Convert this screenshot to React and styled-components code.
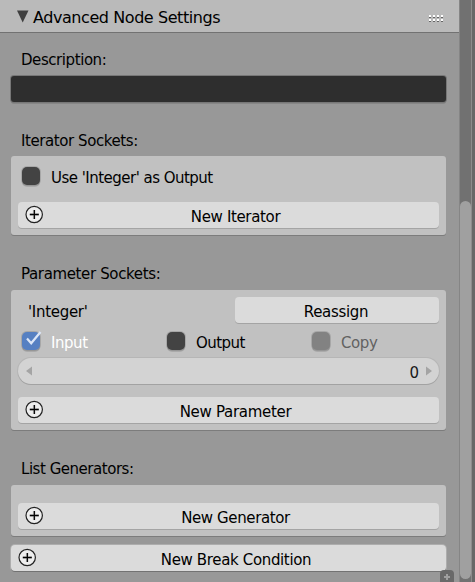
import React from "react";
import styled, { createGlobalStyle } from "styled-components";

const GlobalStyle = createGlobalStyle`
  * { box-sizing: border-box; }
  body {
    margin: 0;
    overflow: hidden;
    background: #989898;
    font-family: "DejaVu Sans", sans-serif;
    font-size: 15px;
    color: #000;
  }
`;

const Region = styled.div`
  position: relative;
  display: flex;
  width: 475px;
  height: 582px;
  overflow: hidden;
  background: #989898;
`;

const Panel = styled.main`
  width: 459px;
  flex: none;
`;

const Header = styled.header`
  display: flex;
  align-items: center;
  height: 33px;
  padding: 0 16px 0 17px;
  background: #bababa;
  border-bottom: 1px solid #727272;
`;

const Title = styled.h1`
  flex: 1;
  margin: 4px 0 0 4px;
  font-size: 16px;
  font-weight: 400;
  line-height: 24px;
  letter-spacing: -0.43px;
  white-space: nowrap;
`;

const Glyph = styled.svg`
  display: block;
  flex: none;
`;

const Grip = styled(Glyph)`
  margin-top: 5px;
`;

const Section = styled.section`
  padding: ${(p) => p.$top}px 13px 0 11px;
`;

const Label = styled.div`
  height: 24px;
  margin-bottom: ${(p) => (p.$gap === undefined ? 4 : p.$gap)}px;
  padding-left: 10px;
  line-height: 24px;
  letter-spacing: ${(p) => p.$track}px;
  white-space: nowrap;
`;

const TextField = styled.div`
  height: 26px;
  border-radius: 3px;
  background: #2e2e2e;
  box-shadow: 0 0 0 1px #777, 0 2px 0 #868686;
`;

const Box = styled.div`
  height: ${(p) => p.$height}px;
  padding: ${(p) => p.$top}px 7px 0;
  border-radius: 3px;
  background: #c1c1c1;
  box-shadow: 0 1px 0 #7c7c7c;
`;

const Button = styled.button`
  position: relative;
  display: flex;
  align-items: center;
  justify-content: center;
  width: ${(p) => (p.$width ? p.$width + "px" : "100%")};
  height: 26px;
  margin: 0;
  padding: 3px ${(p) => p.$inset || 0}px 0 ${(p) => p.$shift || 0}px;
  border: 0;
  border-radius: 4px;
  background: #dbdbdb;
  box-shadow: ${(p) => (p.$raised ? "0 1px 0 #727272, 0 0 0 1px #adadad" : "0 1px 0 #a4a4a4")};
  font: inherit;
  color: inherit;
  letter-spacing: ${(p) => p.$track}px;
  white-space: nowrap;
`;

const ButtonIcon = styled(Glyph)`
  position: absolute;
  left: 7px;
  top: 3px;
`;

const Row = styled.div`
  display: flex;
  justify-content: space-between;
  height: 26px;
`;

const SocketName = styled.span`
  padding: 3px 0 0 10px;
  line-height: 24px;
  letter-spacing: -0.3px;
`;

const Options = styled.div`
  display: grid;
  grid-template-columns: 145px 145px 1fr;
  height: 26px;
  margin: ${(p) => p.$margin};
`;

const Option = styled.label`
  display: flex;
  align-items: flex-start;
  padding-left: 4px;
  color: ${(p) => p.$color || "#000"};
  letter-spacing: ${(p) => p.$track}px;
  line-height: 22px;
  white-space: nowrap;
`;

const Check = styled.span`
  width: 18px;
  height: 18px;
  flex: none;
  margin-right: 11px;
  border-radius: 5px;
  background: ${(p) => p.$fill};
  box-shadow: 0 0 0 1px rgba(90, 90, 90, 0.25), 0 2px 0 #aaa;
`;

const Tick = styled(Glyph)`
  overflow: visible;
`;

const NumberField = styled.div`
  display: flex;
  align-items: center;
  justify-content: space-between;
  height: 26px;
  margin-bottom: 13px;
  padding: 0 7px 0 8px;
  border-radius: 13px;
  background: #d3d3d3;
  box-shadow: 0 1px 0 #a2a2a2, 0 0 0 1px #b6b6b6;
`;

const Value = styled.span`
  margin: 3px 7px 0 auto;
  color: #191919;
`;

const Footer = styled.div`
  padding: 9px 13px 0 11px;
`;

const ScrollTrack = styled.aside`
  width: 13px;
  padding-top: 201px;
  flex: none;
  background: #717171;
  border-left: 1px solid #858585;
  border-right: 1px solid #8c8c8c;
`;

const ScrollThumb = styled.div`
  height: 378px;
  border-radius: 6px;
  background: #a0a0a0;
`;

const Edge = styled.div`
  flex: 1;
  background: #686868;
`;

const CornerTab = styled.div`
  position: absolute;
  left: 440px;
  top: 570px;
  width: 14px;
  height: 12px;
  padding: 4px 0 0 4px;
  border-radius: 4px 4px 0 0;
  background: #696969;
`;

function Add() {
  return (
    <ButtonIcon width="19" height="19" viewBox="0 0 19 19">
      <circle cx="9.2" cy="9.5" r="8.2" fill="#eee" stroke="#222" strokeWidth="1.2" />
      <path d="M9.3 5v9M4.8 9.5h9" stroke="#bbb" strokeWidth="3" opacity=".5" />
      <path d="M9.3 5v9M4.8 9.5h9" stroke="#000" strokeWidth="1.3" />
    </ButtonIcon>
  );
}

function AddButton({ children, ...rest }) {
  return (
    <Button {...rest}>
      <Add />
      {children}
    </Button>
  );
}

export default function App() {
  return (
    <>
      <GlobalStyle />
      <Region>
        <Panel>
          <Header>
            <Glyph width="12" height="13" viewBox="0 0 12 13">
              <path d="M0 .5h11.5L5.7 12.5z" fill="#3f3f3f" />
            </Glyph>
            <Title>Advanced Node Settings</Title>
            <Grip width="14" height="8" viewBox="0 0 14 8">
              {[0, 4].map((y) =>
                [0, 4, 8, 12].map((x) => (
                  <g key={`${x}-${y}`}>
                    <rect x={x} y={y + 2} width="2" height="1" fill="#666" />
                    <rect x={x} y={y} width="2" height="2" fill="#fff" />
                  </g>
                ))
              )}
            </Grip>
          </Header>

          <Section $top={15}>
            <Label $track={-0.43}>Description:</Label>
            <TextField />
          </Section>

          <Section $top={27}>
            <Label $track={-0.42} $gap={3}>Iterator Sockets:</Label>
            <Box $height={79} $top={11}>
              <Options $margin="0 0 9px">
                <Option $track={-0.52}>
                  <Check $fill="#434343" />
                  Use 'Integer' as Output
                </Option>
              </Options>
              <AddButton $track={-0.35} $shift={14}>New Iterator</AddButton>
            </Box>
          </Section>

          <Section $top={27}>
            <Label $track={-0.36}>Parameter Sockets:</Label>
            <Box $height={140} $top={7}>
              <Row>
                <SocketName>'Integer'</SocketName>
                <Button $width={204} $track={-0.3} $inset={2}>Reassign</Button>
              </Row>
              <Options $margin="9px 0 0">
                <Option $track={-0.45} $color="#fff">
                  <Check $fill="#5680c2">
                    <Tick width="18" height="18" viewBox="0 0 18 18">
                      <path d="M5 6.5l4.2 4.8L18.5 0" fill="none" stroke="#dce6f7" strokeWidth="2.2" />
                    </Tick>
                  </Check>
                  Input
                </Option>
                <Option $track={-0.55}>
                  <Check $fill="#434343" />
                  Output
                </Option>
                <Option $track={-0.4} $color="#626262">
                  <Check $fill="#828282" />
                  Copy
                </Option>
              </Options>
              <NumberField>
                <Glyph width="6" height="10" viewBox="0 0 6 10">
                  <path d="M6 .5v9L0 5z" fill="#a4a4a4" />
                </Glyph>
                <Value>0</Value>
                <Glyph width="6" height="10" viewBox="0 0 6 10">
                  <path d="M0 .5v9L6 5z" fill="#a4a4a4" />
                </Glyph>
              </NumberField>
              <AddButton $track={-0.3} $shift={14}>New Parameter</AddButton>
            </Box>
          </Section>

          <Section $top={27}>
            <Label $track={-0.47}>List Generators:</Label>
            <Box $height={51} $top={18}>
              <AddButton $track={-0.38} $shift={14}>New Generator</AddButton>
            </Box>
          </Section>

          <Footer>
            <AddButton $track={-0.35} $shift={15} $raised>
              New Break Condition
            </AddButton>
          </Footer>
        </Panel>
        <ScrollTrack>
          <ScrollThumb />
        </ScrollTrack>
        <Edge />
        <CornerTab>
          <Glyph width="6" height="6" viewBox="0 0 6 6">
            <path d="M3 0v6M0 3h6" stroke="#a0a0a0" strokeWidth="2" />
          </Glyph>
        </CornerTab>
      </Region>
    </>
  );
}
